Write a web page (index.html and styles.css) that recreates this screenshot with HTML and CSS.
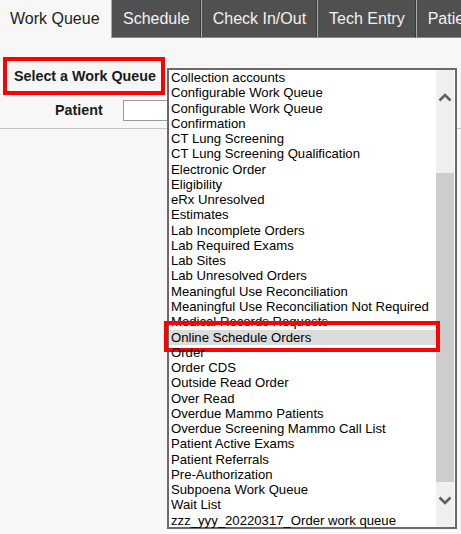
FILE: index.html
```html
<!DOCTYPE html>
<html>
<head>
<meta charset="utf-8">
<link rel="stylesheet" href="styles.css">
</head>
<body>
<nav class="tabs">
  <div class="tab active">Work Queue</div>
  <div class="tab">Schedule</div>
  <div class="tab">Check In/Out</div>
  <div class="tab">Tech Entry</div>
  <div class="tab">Patient</div>
</nav>
<main class="content">
  <div class="select-row">
    <div class="select-label">Select a Work Queue</div>
  </div>
  <div class="patient-row">
    <label class="patient-label">Patient</label>
    <input class="patient-input" type="text">
  </div>
  <div class="listbox">
    <ul class="items">
      <li>Collection accounts</li>
      <li>Configurable Work Queue</li>
      <li>Configurable Work Queue</li>
      <li>Confirmation</li>
      <li>CT Lung Screening</li>
      <li>CT Lung Screening Qualification</li>
      <li>Electronic Order</li>
      <li>Eligibility</li>
      <li>eRx Unresolved</li>
      <li>Estimates</li>
      <li>Lab Incomplete Orders</li>
      <li>Lab Required Exams</li>
      <li>Lab Sites</li>
      <li>Lab Unresolved Orders</li>
      <li>Meaningful Use Reconciliation</li>
      <li>Meaningful Use Reconciliation Not Required</li>
      <li>Medical Records Requests</li>
      <li class="selected">Online Schedule Orders</li>
      <li>Order</li>
      <li>Order CDS</li>
      <li>Outside Read Order</li>
      <li>Over Read</li>
      <li>Overdue Mammo Patients</li>
      <li>Overdue Screening Mammo Call List</li>
      <li>Patient Active Exams</li>
      <li>Patient Referrals</li>
      <li>Pre-Authorization</li>
      <li>Subpoena Work Queue</li>
      <li>Wait List</li>
      <li>zzz_yyy_20220317_Order work queue</li>
    </ul>
    <div class="scrollbar">
      <div class="arrow up">
        <svg width="14" height="9" viewBox="0 0 14 9"><path d="M1.5 7.5 L7 2 L12.5 7.5" fill="none" stroke="#5f5f5f" stroke-width="2.6"/></svg>
      </div>
      <div class="thumb"></div>
      <div class="arrow down">
        <svg width="14" height="9" viewBox="0 0 14 9"><path d="M1.5 1.5 L7 7 L12.5 1.5" fill="none" stroke="#5f5f5f" stroke-width="2.6"/></svg>
      </div>
    </div>
  </div>
</main>
</body>
</html>
```
FILE: styles.css
```css
* { box-sizing: border-box; }
html, body { margin: 0; padding: 0; }
body {
  background: #f7f7f7;
  font-family: "Liberation Sans", Arial, sans-serif;
  width: 461px;
  height: 534px;
  overflow: hidden;
  position: relative;
}
.tabs {
  display: flex;
  height: 38px;
  white-space: nowrap;
  overflow: hidden;
}
.tab {
  height: 38px;
  line-height: 37px;
  font-size: 16px;
  color: #f2f2f2;
  background: #505050;
  padding: 0 10px 0 11px;
  border-left: 1px solid #a8a8a8;
  border-right: 1px solid #3a3a3a;
  border-bottom: 1px solid #8a8a8a;
  flex-shrink: 0;
}
.tab.active {
  background: #f7f7f7;
  color: #1e1e1e;
  border: none;
  padding: 0 10px 0 10px;
  width: 111px;
}
.content {
  position: relative;
}
.select-row {
  display: flex;
  padding: 19px 0 0 3px;
}
.select-label {
  width: 162px;
  height: 38px;
  border: 4px solid #ff0000;
  font-weight: bold;
  font-size: 14.3px;
  color: #1a1a1a;
  padding-left: 7px;
  line-height: 30px;
  white-space: nowrap;
}
.patient-row {
  display: flex;
  align-items: center;
  height: 34px;
  padding-top: 5px;
  padding-bottom: 8px;
  border-bottom: 1px solid #c4c4c4;
}
.patient-label {
  font-weight: bold;
  font-size: 14.3px;
  color: #1a1a1a;
  width: 123px;
  padding-left: 55px;
}
.patient-input {
  width: 80px;
  height: 21px;
  border: 1px solid #9a9a9a;
  background: #fff;
  margin: 0;
  padding: 0;
}
.listbox {
  position: absolute;
  left: 167px;
  top: 30px;
  width: 290px;
  height: 461px;
  border: 2px solid #6a6a6a;
  background: #fff;
  display: flex;
}
.items {
  list-style: none;
  margin: 0;
  padding: 0;
  flex: 1;
  font-size: 13.15px;
  color: #000;
}
.items li {
  height: 15.28px;
  line-height: 15.28px;
  padding-left: 2px;
  white-space: nowrap;
  position: relative;
}
.items li.selected {
  background: #dcdcdc;
}
.items li.selected::after {
  content: "";
  position: absolute;
  top: -9px;
  bottom: -7px;
  left: -5px;
  right: -4px;
  border: 4px solid #ff0000;
}
.scrollbar {
  width: 18px;
  background: #f0f0f0;
  display: flex;
  flex-direction: column;
  margin-right: 1px;
}
.arrow {
  display: flex;
  align-items: center;
  justify-content: center;
}
.arrow.up { height: 103px; padding-bottom: 49px; }
.thumb {
  height: 309px;
  background: #cdcdcd;
}
.arrow.down { flex: 1; padding-bottom: 9px; }
```
